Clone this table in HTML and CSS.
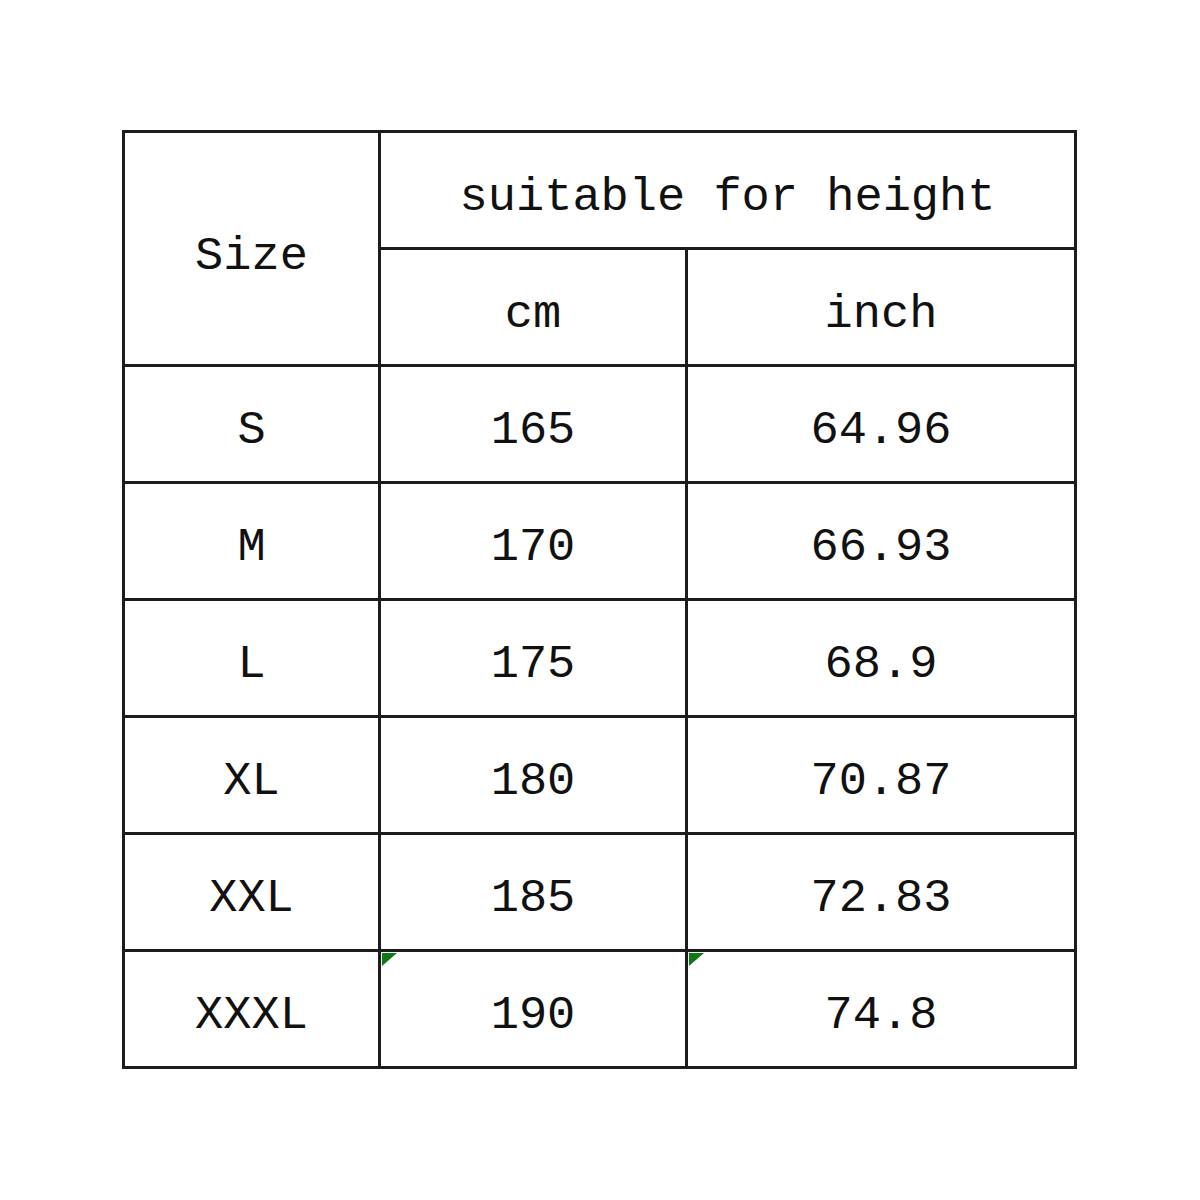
FILE: index.html
```html
<!DOCTYPE html>
<html>
<head>
<meta charset="utf-8">
<link rel="stylesheet" href="styles.css">
</head>
<body>
<div class="page">
<table class="size-table">
  <colgroup>
    <col class="c1"><col class="c2"><col class="c3">
  </colgroup>
  <tr class="head"><td rowspan="2" class="size">Size</td><td colspan="2">suitable for height</td></tr>
  <tr class="head"><td>cm</td><td>inch</td></tr>
  <tr><td>S</td><td>165</td><td>64.96</td></tr>
  <tr><td>M</td><td>170</td><td>66.93</td></tr>
  <tr><td>L</td><td>175</td><td>68.9</td></tr>
  <tr><td>XL</td><td>180</td><td>70.87</td></tr>
  <tr><td>XXL</td><td>185</td><td>72.83</td></tr>
  <tr><td>XXXL</td><td class="mark">190</td><td class="mark">74.8</td></tr>
</table>
</div>
</body>
</html>
```

FILE: styles.css
```css
html, body {
  margin: 0;
  padding: 0;
  background: #ffffff;
}
.page {
  padding: 130px 0 0 122px;
}
.size-table {
  border-collapse: collapse;
  font-family: "Liberation Mono", "DejaVu Sans Mono", monospace;
  font-size: 47px;
  color: #111;
  table-layout: fixed;
  width: 954px;
}
.c1 { width: 256px; }
.c2 { width: 307px; }
.c3 { width: 389px; }
.size-table td {
  border: 3px solid #1c1c1c;
  height: 117px;
  padding: 12px 0 0 0;
  text-align: center;
  vertical-align: middle;
  box-sizing: border-box;
  position: relative;
}
.size-table tr.head td { padding-top: 14px; }
.size-table tr.head td.size { padding-top: 16px; }
.size-table tr.last td { height: 116px; }
.size-table td.mark::before {
  content: "";
  position: absolute;
  left: 1px;
  top: 1px;
  z-index: 2;
  width: 0;
  height: 0;
  border-top: 13px solid #0d7a12;
  border-right: 15px solid transparent;
}
```
